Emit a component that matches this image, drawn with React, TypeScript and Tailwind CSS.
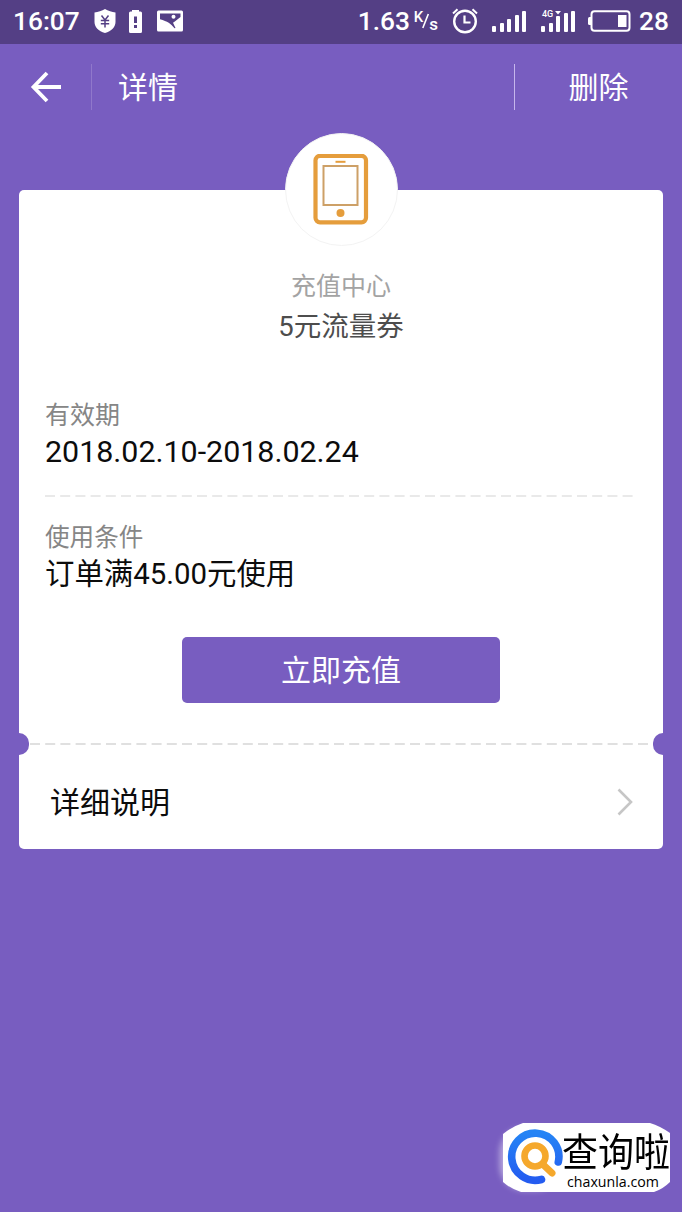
const signalBars = [6, 9, 13, 17, 21];
const dataBars = [6, 9, 16, 19, 21];

function StatusBar() {
  return (
    <div className="flex h-11 items-center bg-[#543f85] pl-[13px] pr-[13px] pb-[2px] text-[26.3px] leading-[42px] font-medium text-white">
      <span className="w-[81px]">16:07</span>
      <svg width="22" height="26" viewBox="0 0 22 26">
        <path d="M11 1C8 3 4 4 0.5 4.500V14c0 5 4 9 10.500 11 6.500-2 10.500-6 10.500-11V4.500C18 4 14 3 11 1z" fill="#fff" />
        <path d="M7.500 7.500L11 12l3.500-4.500M11 12v7.500M6.800 12.500h8.400M6.800 15.800h8.400" fill="none" stroke="#543f85" strokeWidth="1.500" />
      </svg>
      <svg width="13" height="25" viewBox="0 0 13 25" className="ml-[13px]">
        <path d="M3 1h7v1.500h1.500q1.500 0 1.500 1.500v18.500q0 1.500-1.500 1.500h-10q-1.500 0-1.500-1.500V4q0-1.500 1.500-1.500H3z" fill="#fff" />
        <path d="M5 7.500h3v6.500H5zM5 16h3v3H5z" fill="#543f85" />
      </svg>
      <svg width="26" height="22" viewBox="0 0 26 22" className="ml-[15px]">
        <rect width="26" height="21" rx="1.500" y="0.500" fill="#fff" />
        <path d="M3 3.500h20.500v3.500L17.800 11.500 16 12.800 18.500 18 17.500 18.300C14 13.500 10.500 11.500 3 9.200z" fill="#543f85" />
        <circle cx="16.500" cy="6.800" r="2" fill="#fff" />
      </svg>

      <div className="ml-auto flex items-center">
        <span className="w-[56px]">1.63</span>
        <span className="mt-[-8px] text-[15px] leading-none">K</span>
        <svg width="7" height="16" viewBox="0 0 7 16" className="ml-[-1px]">
          <path d="M6.300 1L0.800 15" stroke="#fff" strokeWidth="1.600" />
        </svg>
        <span className="mt-[7px] text-[17px] leading-none">s</span>
        <svg width="26" height="26" viewBox="0 0 26 26" fill="none" stroke="#fff" className="ml-[14px]">
          <circle cx="13" cy="13.500" r="10.800" strokeWidth="2.400" />
          <path d="M12.500 7.500v7h6" strokeWidth="2.200" />
          <path d="M1 5.500L5.500 1.300M25 5.500L20.500 1.300" strokeWidth="2" />
        </svg>
        <div className="ml-[14px] flex h-[22px] items-end gap-[3.500px]">
          {signalBars.map((h) => (
            <span key={h} className="w-[4px] rounded-[1px] bg-white" style={{ height: h }} />
          ))}
        </div>
        <div className="relative ml-[15px] flex h-[22px] items-end gap-[3.500px]">
          <span className="absolute left-[1px] top-0 text-[9px] leading-[9px] font-medium">4G</span>
          <svg width="6" height="4" viewBox="0 0 6 4" className="absolute left-[14px] top-[1px]">
            <path d="M0 0h6L3 3.500z" fill="#fff" />
          </svg>
          {dataBars.map((h) => (
            <span key={h} className="w-[4px] rounded-[1px] bg-white" style={{ height: h }} />
          ))}
        </div>
        <svg width="44" height="22" viewBox="0 0 44 22" className="ml-[12px]">
          <rect x="4.500" y="1.200" width="38" height="19.600" rx="3" fill="none" stroke="#fff" strokeWidth="2" />
          <path d="M4.500 7H2.500Q1 7 1 8.500v5Q1 15 2.500 15h2z" fill="#fff" />
          <rect x="31" y="5" width="8.500" height="12" fill="#fff" />
        </svg>
        <span className="ml-[8px] w-[30px]">28</span>
      </div>
    </div>
  );
}

function Header() {
  return (
    <div className="flex h-[86px] items-center text-[30px] leading-[46px] text-white">
      <button type="button" className="flex w-[91px] justify-start pl-[30px]">
        <svg width="32" height="32" viewBox="0 0 32 32" fill="none" stroke="#fff" strokeWidth="3.800">
          <path d="M17 2L3.500 16 17 30M3.500 16h27.500" />
        </svg>
      </button>
      <div className="h-[46px] w-px bg-[#9078cb]" />
      <h1 className="ml-[26px] pt-[2px]">详情</h1>
      <div className="ml-auto h-[46px] w-[1.500px] bg-[#c6b6ec]" />
      <button type="button" className="w-[167px] pt-[2px] text-center">
        删除
      </button>
    </div>
  );
}

function DashedLine({ color, width }: { color: string; width: number }) {
  return (
    <svg width={width} height="2" viewBox={`0 0 ${width} 2`} className="block">
      <path d={`M0 1H${width}`} stroke={color} strokeWidth="1.400" strokeDasharray="10 5.200" />
    </svg>
  );
}

function Coupon() {
  return (
    <div className="mx-[19px] mt-[60px] h-[659px] overflow-visible rounded-[5px] bg-white">
      <div className="flex h-[554px] flex-col">
        <div className="mx-auto mt-[-57px] flex h-[113px] w-[113px] shrink-0 items-center justify-center rounded-full border border-[#f3f3f3] bg-white">
          <svg width="56" height="72" viewBox="0 0 56 72" fill="none" stroke="#e59d3c">
            <rect x="2.500" y="1.800" width="50.500" height="66.500" rx="4.500" strokeWidth="4.200" />
            <rect x="10.500" y="12" width="34" height="39" stroke="#cda067" strokeWidth="2" />
            <path d="M22.500 7.800h10" strokeWidth="2" />
            <circle cx="27.500" cy="59" r="4" fill="#e59d3c" stroke="none" />
          </svg>
        </div>
        <p className="mt-[23px] h-[36px] text-center text-[25px] leading-[36px] text-[#a3a3a3]">
          充值中心
        </p>
        <p className="mt-[2px] h-10 text-center text-[27.500px] leading-10 text-[#4d4d4d]">
          5元流量券
        </p>

        <div className="mx-[26px] mt-[51px]">
          <p className="h-9 text-[25px] leading-9 text-[#868686]">有效期</p>
          <p className="mt-[-1px] h-[38px] text-[30.400px] leading-[38px] text-[#0c0c0c]">
            2018.02.10-2018.02.24
          </p>
        </div>
        <div className="ml-[26px] mt-[24px]">
          <DashedLine color="#e2e2e2" width={588} />
        </div>
        <div className="mx-[26px] mt-[23px]">
          <p className="h-9 text-[24.600px] leading-9 text-[#868686]">使用条件</p>
          <p className="mt-[-1px] h-[38px] text-[29.400px] leading-[38px] text-[#0c0c0c]">
            订单满45.00元使用
          </p>
        </div>
        <button
          type="button"
          className="mx-auto mt-[44px] h-[65.500px] w-[318px] shrink-0 rounded-[5px] bg-[#785dc0] pt-[2px] text-[30px] leading-[64px] text-white"
        >
          立即充值
        </button>
      </div>

      {/* tear line */}
      <div className="mt-[-11px] flex h-[22px] items-center justify-between">
        <div className="h-[22px] w-[10px] rounded-r-full bg-[#785dc0]" />
        <DashedLine color="#d6d6d6" width={622} />
        <div className="h-[22px] w-[10px] rounded-l-full bg-[#785dc0]" />
      </div>

      <div className="flex h-[94px] items-center justify-between pl-[31px] pr-[30px]">
        <span className="pt-px text-[30px] leading-[44px] text-[#0c0c0c]">详细说明</span>
        <svg width="16" height="28" viewBox="0 0 16 28" fill="none" stroke="#c6c6c6" strokeWidth="2.600">
          <path d="M1.500 1.500L14 14 1.500 26.500" />
        </svg>
      </div>
    </div>
  );
}

function SiteBadge() {
  return (
    <div className="absolute left-[503px] top-[1123px] h-[69px] w-[167px]">
      <div className="absolute left-[-3px] top-[5px] h-[62px] w-[60px] rounded-[24px] bg-white/50 blur-[3px]" />
      <svg width="167" height="69" viewBox="0 0 167 69" className="absolute left-0 top-0">
        <path d="M20 0H147Q157 3 167 10V59Q160 66 151 69H18Q8 66 0 59V11Q8 4 20 0z" fill="#fff" />
        <path d="M55.300 39A23.600 23.600 0 1 0 38.500 56.500" fill="none" stroke="url(#ring)" strokeWidth="7.600" strokeLinecap="round" />
        <circle cx="32" cy="33" r="10.500" fill="none" stroke="#f5a82c" strokeWidth="6.600" />
        <path d="M40.500 42l8.500 8" stroke="#f5a82c" strokeWidth="7" strokeLinecap="round" />
        <defs>
          <linearGradient id="ring" x1="0" y1="0" x2="0" y2="1">
            <stop offset="0" stopColor="#2584f5" />
            <stop offset="1" stopColor="#245cf0" />
          </linearGradient>
        </defs>
      </svg>
      <div className="relative flex flex-col pl-[59px] text-black">
        <span className="mt-[12px] h-[36px] origin-left scale-y-[1.080] whitespace-nowrap text-[36px] leading-[36px]">
          查询啦
        </span>
        <span className="ml-[5px] mt-[3px] h-4 font-['Open_Sans'] text-[14.200px] leading-4 font-medium">
          chaxunla.com
        </span>
      </div>
    </div>
  );
}

export default function App() {
  return (
    <div className="relative h-[1212px] w-[682px] overflow-hidden bg-[#785dc0] font-[Roboto,'Noto_Sans_CJK_SC',sans-serif]">
      <StatusBar />
      <Header />
      <Coupon />
      <SiteBadge />
    </div>
  );
}
